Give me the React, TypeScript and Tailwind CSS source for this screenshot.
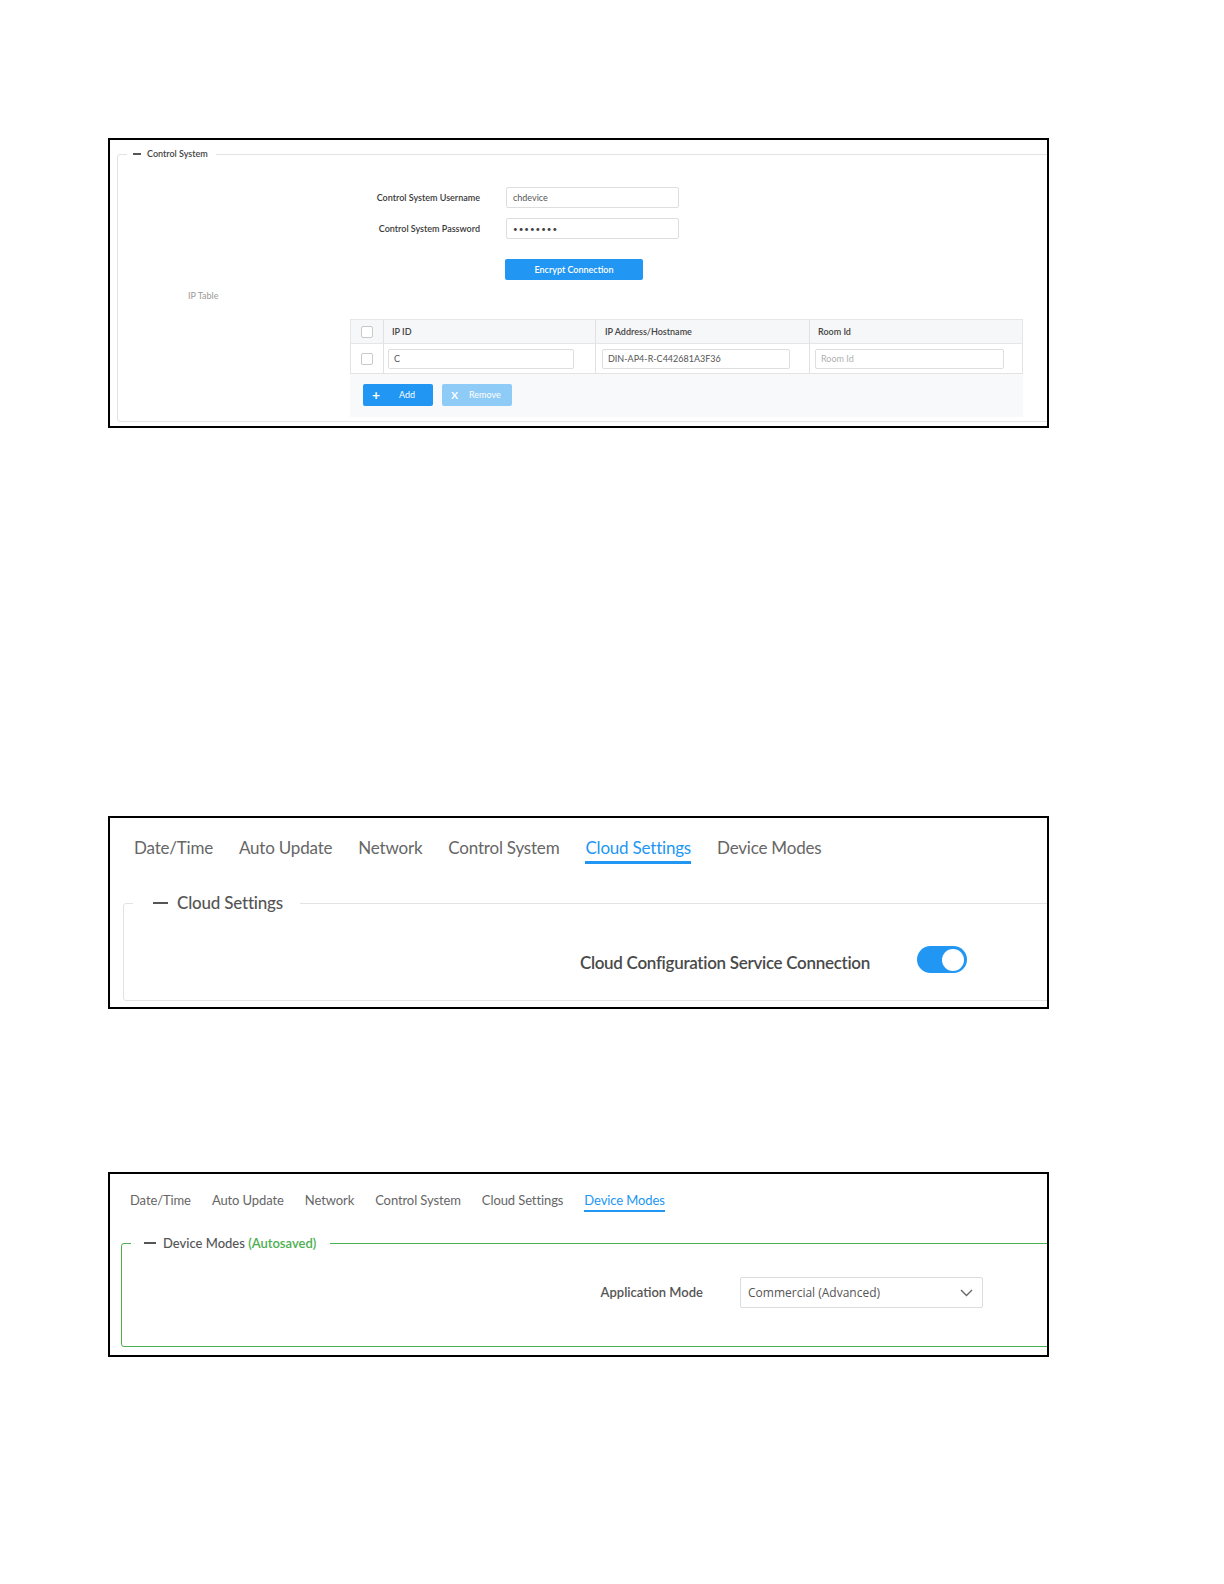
import React from "react";

const FONT = "font-['Lato','Open_Sans',sans-serif]";

const Check = () => (
  <span className="block w-[12px] h-[12px] border border-[#c9c9c9] rounded-[2px] bg-white" />
);

const ControlSystemPanel = () => (
  <div className="w-[941px] h-[290px] border-2 border-black overflow-hidden bg-white">
    <fieldset className="mt-[7px] ml-[7px] mr-[-20px] border border-[#e3e3e3] rounded-[3px] pt-[26px] pb-[4px]">
      <legend className="ml-[9px] pl-[6px] pr-[8px] flex items-center gap-[6px] leading-[14px] text-[9px] text-[#444]">
        <span className="block w-[8px] h-[1.5px] bg-[#555]" />
        <span className="font-semibold">Control System</span>
      </legend>

      <div className="flex flex-col gap-[10px]">
        <div className="flex items-center gap-[26px]">
          <span className="w-[362px] text-right text-[9px] font-semibold text-[#3a3a3a]">Control System Username</span>
          <div className="w-[173px] h-[21px] border border-[#dedede] rounded-[2px] flex items-center pl-[6px] text-[9px] text-[#555]">
            chdevice
          </div>
        </div>
        <div className="flex items-center gap-[26px]">
          <span className="w-[362px] text-right text-[9px] font-semibold text-[#3a3a3a]">Control System Password</span>
          <div className="w-[173px] h-[21px] border border-[#dedede] rounded-[2px] flex items-center pl-[6px] text-[8px] tracking-[1px] text-[#444]">
            ••••••••
          </div>
        </div>
      </div>

      <div className="mt-[20px] ml-[387px] w-[138px] h-[21px] bg-[#2196f3] rounded-[2px] flex items-center justify-center text-[9px] font-semibold text-white">
        Encrypt Connection
      </div>

      <div className="mt-[10px] ml-[70px] text-[9px] leading-[12px] text-[#9a9a9a]">IP Table</div>

      <div className="mt-[17px] ml-[232px] w-[673px]">
        <div className="grid grid-cols-[33px_212px_214px_214px] h-[25px] bg-[#f6f7f8] border border-[#e6e6e6] text-[9px] font-semibold text-[#444]">
          <div className="flex items-center justify-center border-r border-[#e1e1e1]">
            <Check />
          </div>
          <div className="flex items-center pl-[8px] border-r border-[#e1e1e1]">IP ID</div>
          <div className="flex items-center pl-[9px] border-r border-[#e1e1e1]">IP Address/Hostname</div>
          <div className="flex items-center pl-[8px]">Room Id</div>
        </div>
        <div className="grid grid-cols-[33px_212px_214px_214px] h-[30px] bg-white border-x border-b border-[#e3e3e3] text-[9px]">
          <div className="flex items-center justify-center border-r border-[#e1e1e1]">
            <Check />
          </div>
          <div className="flex items-center pl-[4px] border-r border-[#e1e1e1]">
            <div className="w-[186px] h-[20px] border border-[#dedede] rounded-[2px] flex items-center pl-[5px] text-[#555]">C</div>
          </div>
          <div className="flex items-center pl-[6px] border-r border-[#e1e1e1]">
            <div className="w-[188px] h-[20px] border border-[#dedede] rounded-[2px] flex items-center pl-[5px] text-[#555]">
              DIN-AP4-R-C442681A3F36
            </div>
          </div>
          <div className="flex items-center pl-[5px]">
            <div className="w-[189px] h-[20px] border border-[#dedede] rounded-[2px] flex items-center pl-[5px] text-[#b0b0b0]">
              Room Id
            </div>
          </div>
        </div>
        <div className="h-[43px] bg-[#f8f9fa] flex items-start gap-[9px] pt-[10px] pl-[13px]">
          <div className="w-[70px] h-[22px] bg-[#2196f3] rounded-[2px] flex items-center text-white text-[9px]">
            <span className="w-[26px] text-center text-[14px] font-bold leading-none">+</span>
            <span className="ml-[10px]">Add</span>
          </div>
          <div className="w-[70px] h-[22px] bg-[#8fcbf7] rounded-[2px] flex items-center text-white text-[9px]">
            <span className="w-[25px] text-center text-[10px] font-bold leading-none">X</span>
            <span className="ml-[2px]">Remove</span>
          </div>
        </div>
      </div>
    </fieldset>
  </div>
);

const Tabs = ({ active, big }: { active: string; big: boolean }) => {
  const items = ["Date/Time", "Auto Update", "Network", "Control System", "Cloud Settings", "Device Modes"];
  return (
    <div className={big ? "flex gap-[26px] pl-[24px] pt-[18px]" : "flex gap-[21px] pl-[20px] pt-[16px]"}>
      {items.map((t) => (
        <span
          key={t}
          className={
            (big
              ? "text-[17px] tracking-[-0.2px] leading-[24px] pb-[1px] border-b-[3px] "
              : "text-[13px] tracking-[-0.1px] leading-[20px] border-b-2 ") +
            (t === active ? "text-[#2196f3] border-[#2196f3]" : "text-[#666] border-transparent")
          }
        >
          {t}
        </span>
      ))}
    </div>
  );
};

const CloudPanel = () => (
  <div className="w-[941px] h-[193px] border-2 border-black overflow-hidden bg-white">
    <Tabs active="Cloud Settings" big />
    <fieldset className="mt-[27px] ml-[13px] mr-[-20px] border border-[#e3e3e3] rounded-[3px] pt-[29px] pb-[24px]">
      <legend className="ml-[9px] pl-[20px] pr-[17px] flex items-center gap-[9px] leading-[24px] text-[17px] tracking-[-0.2px] text-[#555]">
        <span className="block w-[15px] h-[2px] bg-[#555]" />
        <span className="font-medium">Cloud Settings</span>
      </legend>
      <div className="flex items-center gap-[47px]">
        <span className="w-[746px] pt-[6px] text-right text-[17px] tracking-[-0.3px] font-semibold text-[#4a4a4a]">
          Cloud Configuration Service Connection
        </span>
        <div className="w-[50px] h-[27px] rounded-full bg-[#2196f3] flex items-center justify-end pr-[3px]">
          <span className="block w-[22px] h-[22px] rounded-full bg-white" />
        </div>
      </div>
    </fieldset>
  </div>
);

const DeviceModesPanel = () => (
  <div className="w-[941px] h-[185px] border-2 border-black overflow-hidden bg-white">
    <Tabs active="Device Modes" big={false} />
    <fieldset className="mt-[21px] ml-[11px] mr-[-20px] border border-[#4caf50] rounded-[3px] pt-[24px] pb-[38px]">
      <legend className="ml-[9px] pl-[13px] pr-[14px] flex items-center gap-[7px] leading-[20px] text-[13px]">
        <span className="block w-[12px] h-[1.5px] bg-[#555]" />
        <span className="font-medium text-[#555]">
          Device Modes <span className="font-semibold text-[#4caf50]">(Autosaved)</span>
        </span>
      </legend>
      <div className="flex items-center gap-[37px]">
        <span className="w-[581px] text-right text-[13px] font-semibold text-[#555]">Application Mode</span>
        <div className="w-[243px] h-[31px] border border-[#dcdcdc] rounded-[2px] flex items-center justify-between pl-[7px] pr-[9px]">
          <span className="font-['Open_Sans',sans-serif] text-[12px] text-[#555]">Commercial (Advanced)</span>
          <svg width="13" height="8" viewBox="0 0 13 8" fill="none">
            <polyline points="1,1 6.5,6.5 12,1" stroke="#666" strokeWidth="1.4" />
          </svg>
        </div>
      </div>
    </fieldset>
  </div>
);

export default function App() {
  return (
    <div className={`${FONT} w-[1224px] min-h-[1584px] bg-white pt-[138px] pl-[108px]`}>
      <ControlSystemPanel />
      <div className="mt-[388px]">
        <CloudPanel />
      </div>
      <div className="mt-[163px]">
        <DeviceModesPanel />
      </div>
    </div>
  );
}
